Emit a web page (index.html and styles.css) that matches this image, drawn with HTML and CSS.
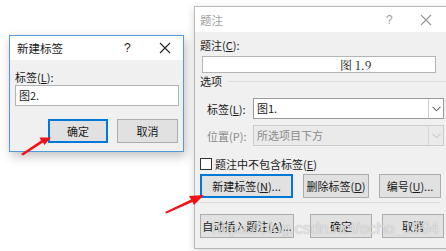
FILE: index.html
```html
<!DOCTYPE html>
<html>
<head>
<meta charset="utf-8">
<link rel="stylesheet" href="styles.css">
</head>
<body>
<div class="desk">
  <div class="dlg dlg-new">
    <div class="titlebar">
      <span class="title">新建标签</span>
      <span class="tb-help">?</span>
      <span class="tb-close"><svg width="12" height="12" viewBox="0 0 12 12"><path d="M1 1L11 11M11 1L1 11" stroke="#222" stroke-width="1.1" fill="none"/></svg></span>
    </div>
    <div class="body new-body">
      <div class="lbl">标签(<u>L</u>):</div>
      <div class="input new-input">图2.</div>
      <div class="btnrow">
        <div class="btn btn-focus w60">确定</div>
        <div class="btn w61">取消</div>
      </div>
    </div>
  </div>

  <div class="dlg dlg-cap">
    <div class="titlebar">
      <span class="title inactive">题注</span>
      <span class="tb-help inactive">?</span>
      <span class="tb-close"><svg width="12" height="12" viewBox="0 0 12 12"><path d="M1 1L11 11M11 1L1 11" stroke="#999" stroke-width="1.1" fill="none"/></svg></span>
    </div>
    <div class="body cap-body">
      <div class="lbl">题注(<u>C</u>):</div>
      <div class="input cap-input"><span class="cap-text">图 1.9</span></div>
      <div class="group"><span>选项</span><span class="group-line"></span></div>
      <div class="frow">
        <span class="flabel">标签(<u>L</u>):</span>
        <div class="combo"><span class="combo-text">图1.</span><span class="combo-btn"><svg width="9" height="6" viewBox="0 0 9 6"><path d="M0.5 0.8L4.5 4.8L8.5 0.8" stroke="#333" stroke-width="1" fill="none"/></svg></span></div>
      </div>
      <div class="frow frow2">
        <span class="flabel dis">位置(P):</span>
        <div class="combo combo-dis"><span class="combo-text">所选项目下方</span><span class="combo-btn"><svg width="9" height="6" viewBox="0 0 9 6"><path d="M0.5 0.8L4.5 4.8L8.5 0.8" stroke="#bbb" stroke-width="1" fill="none"/></svg></span></div>
      </div>
      <div class="chkrow"><span class="chk"></span><span>题注中不包含标签(<u>E</u>)</span></div>
      <div class="brow">
        <div class="btn btn-focus w93">新建标签(<u>N</u>)...</div>
        <div class="btn w66">删除标签(<u>D</u>)</div>
        <div class="btn w62">编号(<u>U</u>)...</div>
      </div>
      <div class="sep"></div>
      <div class="brow brow2">
        <div class="btn w94">自动插入题注(<u>A</u>)...</div>
        <div class="btn w62 ok">确定</div>
        <div class="btn w62">取消</div>
      </div>
    </div>
  </div>

  <div class="watermark">https://blog.csdn.net/echo_1994</div>

  <svg class="arrows" width="446" height="251" viewBox="0 0 446 251">
    <polygon points="21,154 41,140.5 39.5,137.5 51,137.5 44.5,145 43,142.5 23,155.5" fill="#f0141a"/>
    <polygon points="165,212 191,199.5 189,196 204,195 194,205 192.5,202 166.5,213.5" fill="#f0141a"/>
  </svg>
</div>
</body>
</html>
```
FILE: styles.css
```css
html, body {
  margin: 0;
  padding: 0;
  background: #fff;
}
.desk {
  position: relative;
  width: 446px;
  height: 251px;
  overflow: hidden;
  font-family: "Noto Sans CJK SC", "Microsoft YaHei", sans-serif;
  font-size: 11px;
  color: #1a1a1a;
}
u { text-decoration: underline; text-underline-offset: 1px; }

.dlg {
  position: absolute;
  background: #f0f0f0;
  box-sizing: border-box;
  display: flex;
  flex-direction: column;
}
.dlg-new {
  left: 9px;
  top: 35px;
  width: 175px;
  height: 117px;
  border: 1px solid #4f9ae0;
  box-shadow: 2px 4px 10px rgba(0,0,0,0.25);
  z-index: 2;
}
.dlg-cap {
  left: 194px;
  top: 6px;
  width: 262px;
  height: 243px;
  border: 1px solid #b8b8b8;
  box-shadow: 0 2px 8px rgba(0,0,0,0.15);
  z-index: 1;
}
.titlebar {
  background: #fff;
  display: flex;
  align-items: center;
  position: relative;
  flex: none;
}
.dlg-new .titlebar { height: 24px; padding-left: 7px; }
.dlg-cap .titlebar { height: 25px; padding-left: 5px; }
.title { font-size: 11.5px; line-height: 16px; }
.inactive { color: #a0a0a0; }
.tb-help {
  position: absolute;
  font-family: "Liberation Sans", sans-serif;
  font-size: 12px;
}
.tb-close { position: absolute; display: flex; }
.dlg-new .tb-help { left: 114px; top: 5px; }
.dlg-new .tb-close { left: 149px; top: 6px; }
.dlg-cap .tb-help { left: 191px; top: 6px; }
.dlg-cap .tb-close { left: 225px; top: 7px; }

.body { display: flex; flex-direction: column; }
.new-body { padding: 9px 4px 0 5px; }
.lbl { line-height: 16px; height: 16px; }
.input {
  background: #fff;
  border: 1px solid #b4b4b4;
  box-sizing: border-box;
  line-height: 18px;
}
.new-input { height: 21px; padding-left: 3px; margin-right: 0; }
.btnrow {
  display: flex;
  justify-content: flex-end;
  gap: 9px;
  margin-top: 13px;
  padding-right: 1px;
}
.btn {
  box-sizing: border-box;
  height: 24px;
  background: #e1e1e1;
  border: 1px solid #adadad;
  display: flex;
  align-items: center;
  justify-content: center;
  line-height: 16px;
  white-space: nowrap;
}
.btn-focus { border: 2px solid #0078d7; }
.w60 { width: 60px; }
.w61 { width: 61px; }
.w62 { width: 62px; }
.w66 { width: 66px; }
.w93 { width: 93px; }
.w94 { width: 94px; }

.cap-body { padding: 5px 0 0 5px; width: 245px; }
.cap-input {
  height: 17px;
  margin: 3px 0 0 2px;
  width: 234px;
  line-height: 15px;
  padding-left: 137px;
}
.cap-text { font-family: "Noto Serif CJK SC", "Liberation Serif", "Noto Sans CJK SC", serif; font-size: 12px; }
.group {
  display: flex;
  align-items: center;
  line-height: 16px;
  gap: 6px;
}
.group-line { flex: 1; height: 1px; background: #dcdcdc; margin-right: -20px; }
.frow {
  display: flex;
  align-items: center;
  margin-top: 9px;
  padding-left: 7px;
}
.frow2 { margin-top: 6px; }
.flabel { width: 46px; line-height: 16px; }
.dis { color: #8a8a8a; }
.combo {
  display: flex;
  width: 191px;
  height: 21px;
  box-sizing: border-box;
  background: #fff;
  border: 1px solid #9a9a9a;
}
.combo-text { flex: 1; padding-left: 3px; line-height: 19px; }
.combo-btn {
  width: 14px;
  border-left: 1px solid #cfcfcf;
  display: flex;
  align-items: center;
  justify-content: center;
}
.combo-dis { background: #eaeaea; border-color: #cccccc; color: #8a8a8a; }
.combo-dis .combo-btn { border-left-color: #d8d8d8; }

.chkrow {
  display: flex;
  align-items: center;
  gap: 3px;
  margin-top: 11px;
  line-height: 16px;
  height: 13px;
}
.chk {
  width: 12px;
  height: 12px;
  box-sizing: border-box;
  border: 1px solid #333;
  background: #fff;
}
.brow {
  display: flex;
  gap: 10px;
  margin-top: 4px;
}
.brow2 { margin-top: 11px; }
.brow2 .ok { margin-left: 6px; }
.sep {
  height: 1px;
  background: #dadada;
  margin-top: 4px;
  width: 240px;
}

.watermark {
  position: absolute;
  left: 212px;
  top: 220px;
  font-family: "Liberation Sans", sans-serif;
  font-size: 16px;
  color: rgba(240,240,240,0.8);
  text-shadow: 0 0 1px rgba(110,110,110,0.6);
  z-index: 5;
}
.arrows {
  position: absolute;
  left: 0;
  top: 0;
  z-index: 6;
}
```
